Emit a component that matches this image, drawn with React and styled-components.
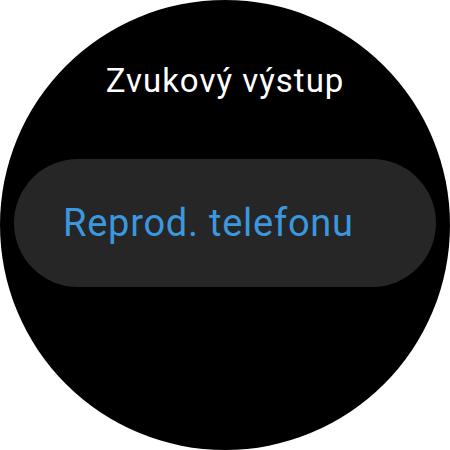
import styled, { createGlobalStyle } from "styled-components"

const GlobalStyle = createGlobalStyle`
    html, body {
        margin: 0;
        padding: 0;
        background: #ffffff;
    }
    body {
        font-family: Roboto, "Noto Sans", sans-serif;
    }
`;

export default function App() {
  return (
    <>
        <GlobalStyle />
        <Watch>
            <Title>Zvukový výstup</Title>
            <OptionCard>
                <OptionLabel>Reprod. telefonu</OptionLabel>
            </OptionCard>
        </Watch>
    </>
  )
}

const Watch = styled.div`
    width: 450px;
    height: 450px;
    border-radius: 50%;
    background-color: #000;
    display: flex;
    flex-direction: column;
    align-items: center;
    box-sizing: border-box;
    padding: 61px 14px 0;
    overflow: hidden;
`;

const Title = styled.h1`
    margin: 0;
    font-size: 33px;
    font-weight: 400;
    line-height: 40px;
    color: #fff;
    letter-spacing: 1px;
`;

const OptionCard = styled.div`
    margin-top: 58px;
    width: 100%;
    height: 128px;
    border-radius: 64px;
    background-color: #262626;
    display: flex;
    align-items: center;
    box-sizing: border-box;
    padding-left: 49px;
`;

const OptionLabel = styled.span`
    font-size: 38px;
    font-weight: 400;
    color: #3b97de;
    letter-spacing: 0.75px;
`;
